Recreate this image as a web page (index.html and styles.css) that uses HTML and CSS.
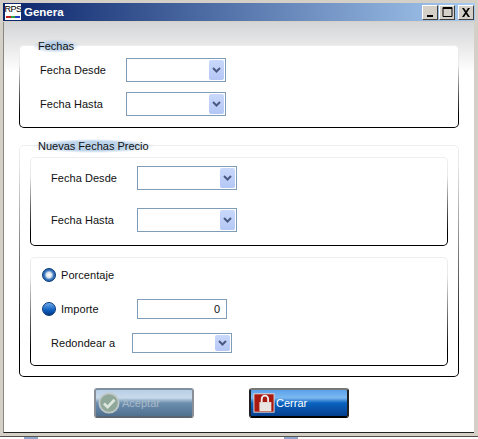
FILE: index.html
```html
<!DOCTYPE html>
<html lang="es">
<head>
<meta charset="utf-8">
<title>Genera</title>
<link rel="stylesheet" href="styles.css">
</head>
<body>
<div class="window">
  <header class="titlebar">
    <div class="app-icon"><span class="app-icon-text">RPS</span><span class="app-icon-bar"></span></div>
    <span class="title">Genera</span>
    <div class="win-buttons">
      <button class="win-btn" aria-label="Minimizar"><svg width="9" height="9" viewBox="0 0 9 9"><rect x="1" y="7" width="6" height="2" fill="#000"/></svg></button>
      <button class="win-btn" aria-label="Maximizar"><svg width="11" height="10" viewBox="0 0 11 10"><path d="M1 0.5H10V9.5H1Z M1 1.5H10" fill="none" stroke="#000"/></svg></button>
      <button class="win-btn win-close" aria-label="Cerrar"><svg width="10" height="9" viewBox="0 0 10 9"><path d="M1 0H3L5 3L7 0H9L6 4.500L9 9H7L5 6L3 9H1L4 4.500Z" fill="#000"/></svg></button>
    </div>
  </header>
  <main class="content">
    <section class="panel panel-fechas">
      <div class="panel-in pad-fechas">
        <span class="legend">Fechas</span>
        <div class="row"><label class="lbl lbl-86">Fecha Desde</label><div class="combo"><span class="arrow"><svg width="9" height="6" viewBox="0 0 9 6"><path d="M1 1L4.500 4.500L8 1" fill="none" stroke="#4a5a80" stroke-width="2"/></svg></span></div></div>
        <div class="row"><label class="lbl lbl-86">Fecha Hasta</label><div class="combo"><span class="arrow"><svg width="9" height="6" viewBox="0 0 9 6"><path d="M1 1L4.500 4.500L8 1" fill="none" stroke="#4a5a80" stroke-width="2"/></svg></span></div></div>
      </div>
    </section>
    <section class="panel panel-nuevas">
      <div class="panel-in pad-nuevas">
        <span class="legend">Nuevas Fechas Precio</span>
        <div class="panel">
          <div class="panel-in pad-inner1">
            <div class="row"><label class="lbl lbl-86">Fecha Desde</label><div class="combo"><span class="arrow"><svg width="9" height="6" viewBox="0 0 9 6"><path d="M1 1L4.500 4.500L8 1" fill="none" stroke="#4a5a80" stroke-width="2"/></svg></span></div></div>
            <div class="row"><label class="lbl lbl-86">Fecha Hasta</label><div class="combo"><span class="arrow"><svg width="9" height="6" viewBox="0 0 9 6"><path d="M1 1L4.500 4.500L8 1" fill="none" stroke="#4a5a80" stroke-width="2"/></svg></span></div></div>
          </div>
        </div>
        <div class="panel">
          <div class="panel-in pad-inner2">
            <div class="row row-s"><span class="radio radio-on"></span><label class="lbl">Porcentaje</label></div>
            <div class="row row-s"><span class="radio"></span><label class="lbl lbl-76">Importe</label><div class="num">0</div></div>
            <div class="row row-s row-red"><label class="lbl lbl-81">Redondear a</label><div class="combo combo-s"><span class="arrow"><svg width="9" height="6" viewBox="0 0 9 6"><path d="M1 1L4.500 4.500L8 1" fill="none" stroke="#4a5a80" stroke-width="2"/></svg></span></div></div>
          </div>
        </div>
      </div>
    </section>
    <footer class="actions">
      <button class="btn btn-off">
        <svg class="btn-ic btn-ic-ok" width="22" height="22" viewBox="0 0 24 24"><circle cx="12" cy="12" r="10.500" fill="#8fa89a" stroke="#c0c8c8" stroke-width="2"/><path d="M6.500 12.500L10.500 16.500L18 8.500" fill="none" stroke="#dfe8df" stroke-width="3"/></svg>
        <span>Aceptar</span>
      </button>
      <button class="btn btn-on">
        <svg class="btn-ic" width="22" height="24" viewBox="0 0 24 24"><rect x="1" y="2" width="22" height="20" fill="#a81a10" stroke="#e6e0dc"/><rect x="7" y="11" width="13" height="10" fill="#e8e4e0"/><path d="M9.500 11V7.500a3.500 3.500 0 0 1 7 0V11" fill="none" stroke="#eee" stroke-width="2"/></svg>
        <span>Cerrar</span>
      </button>
    </footer>
  </main>
</div>
<div class="under"><span class="under-bit"></span><span class="under-bit"></span></div>
</body>
</html>
```
FILE: styles.css
```css
* { box-sizing: border-box; }
html, body { margin: 0; padding: 0; }
body { width: 478px; height: 439px; overflow: hidden; background: #fff; font-family: "Liberation Sans", Arial, sans-serif; font-size: 11px; color: #111; }

.window { width: 478px; height: 437px; background: #d4d0c8; padding: 3px 4px 3px 3px; display: flex; flex-direction: column; border-bottom: 1px solid #55524c; }

.titlebar { height: 18px; flex: none; margin-right: -1px; background: linear-gradient(90deg, #0a246a, #a6caf0); display: flex; align-items: center; padding: 0 1px 0 2px; }
.app-icon { width: 16px; height: 16px; background: #fff; display: flex; flex-direction: column; align-items: center; overflow: hidden; }
.app-icon-text { font-size: 9px; line-height: 11px; font-weight: 400; color: #000; letter-spacing: -0.5px; font-family: "Liberation Sans Narrow", "Liberation Sans", sans-serif; }
.app-icon-bar { width: 14px; height: 2px; margin-top: 1px; background: linear-gradient(90deg, #c02020 33%, #30a040 33%, #30a040 66%, #2040c0 66%); }
.title { margin-left: 3px; color: #fff; font-weight: 700; font-size: 11.500px; flex: 1; }
.win-buttons { display: flex; gap: 1px; }
.win-close { margin-left: 2px; }
.win-btn { width: 16px; height: 15px; padding: 0; background: #d4d0c8; border: 1px solid; border-color: #fff #404040 #404040 #fff; display: flex; align-items: center; justify-content: center; }

.content { flex: 1; margin-top: 1px; padding: 23px 15px 0 15px; background: linear-gradient(180deg, #d3d5d7 0, #e9e9e9 24px, #ffffff 50px); border-left: 1px solid #8a8780; border-bottom: 1px solid #222; display: flex; flex-direction: column; }

.panel { padding: 1px; border-radius: 5px; background: linear-gradient(180deg, #efefef 0, #e8e8e8 20px, #555 60%, #000 85%); }
.panel-in { position: relative; background: #fff; border-radius: 4px; display: flex; flex-direction: column; }
.panel-fechas { height: 83px; }
.panel-nuevas { height: 232px; margin-top: 17px; }
.pad-fechas { height: 100%; padding: 12px 0 0 20px; gap: 10px; }
.pad-nuevas { height: 100%; padding: 11px 10px 0; gap: 11px; }
.pad-inner1 { height: 87px; padding: 8px 0 0 20px; gap: 18px; }
.pad-inner2 { height: 107px; padding: 7px 0 0 11px; gap: 14px; }

.legend { position: absolute; left: 12px; top: -7px; padding: 0 6px; font-size: 11px; line-height: 14px; white-space: nowrap; background: radial-gradient(ellipse closest-side, #b4cde6 45%, rgba(200,220,240,0) 100%); }
.pad-nuevas .legend { background: radial-gradient(ellipse closest-side, #bcd3ea 65%, rgba(200,220,240,0) 100%); }

.row { display: flex; align-items: center; height: 24px; }
.row-s { height: 20px; }
.row-red { padding-left: 9px; }
.lbl { font-size: 11px; letter-spacing: 0.05px; white-space: nowrap; }
.lbl-86 { width: 86px; }
.lbl-76 { width: 76px; }
.lbl-81 { width: 81px; }

.combo { width: 100px; height: 24px; border: 1px solid #7f9db9; background: #fff; display: flex; justify-content: flex-end; align-items: center; padding-right: 1px; }
.combo-s { height: 20px; }
.arrow { width: 15px; height: 20px; background: linear-gradient(180deg, #c9d8fb, #b4c7f5); border-radius: 2px; display: flex; align-items: center; justify-content: center; }
.combo-s .arrow { height: 16px; }
.num { width: 90px; height: 20px; border: 1px solid #7f9db9; background: #fff; text-align: right; line-height: 18px; padding-right: 6px; font-size: 11px; }

.radio { width: 14px; height: 14px; border-radius: 50%; margin-right: 5px; background: linear-gradient(180deg, #6fa8e8, #0d5fc0 60%, #04367f); border: 1px solid #0a3a78; }
.radio-on { background: radial-gradient(circle, #ffffff 0, #dfe6ee 30%, #3a78c0 55%, #0b3c80 100%); }

.actions { display: flex; padding: 11px 0 0 75px; gap: 55px; }
.btn { width: 100px; height: 30px; padding: 0 0 0 2px; border: 2px solid; border-radius: 3px; display: flex; align-items: center; font-family: inherit; font-size: 11px; }
.btn-off { border-color: #7f8f9f #8a8f96 #5a646e; background: linear-gradient(180deg, #b8cfe6 0, #c8daea 30%, #6c8eaf 50%, #50708f 100%); color: #a9b9c6; }
.btn-on { border-color: #777 #222 #000; background: linear-gradient(180deg, #5aa2ec 0, #7cb8f0 30%, #0a62c0 50%, #043f8e 100%); color: #fff; }
.btn-ic { flex: none; margin-right: 1px; }
.btn-ic-ok { margin-right: 2px; }

.under { height: 2px; display: flex; padding-left: 24px; gap: 246px; }
.under-bit { width: 14px; height: 2px; background: #8fa6cc; }
```
